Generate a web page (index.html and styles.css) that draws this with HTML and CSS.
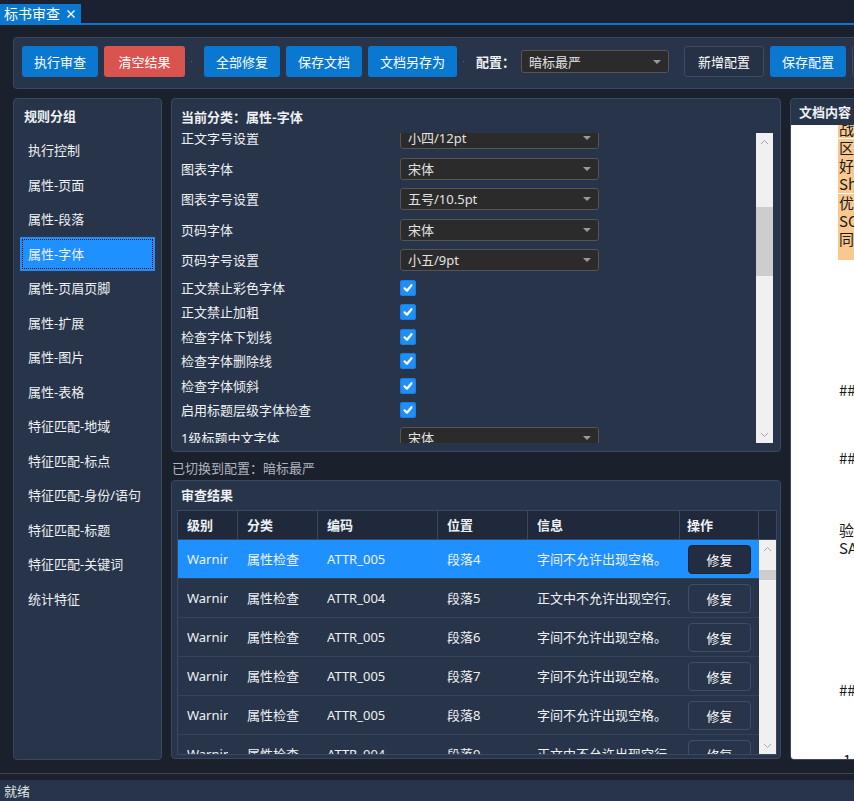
FILE: index.html
```html
<!DOCTYPE html>
<html lang="zh-CN">
<head>
  <meta charset="UTF-8">
  <title>标书审查</title>
  <link rel="stylesheet" href="styles.css">
</head>
<body>
<!-- 顶部标签页 -->
<div class="tabbar">
  <div class="tab">标书审查<svg class="tab-close" width="10" height="10" viewBox="0 0 10 10"><path d="M1.5 1.5L8.5 8.5M8.5 1.5L1.5 8.5" stroke="#fff" stroke-width="1.4"/></svg></div>
</div>

<div class="workspace">
  <!-- 工具栏 -->
  <div class="toolbar">
    <button class="btn">执行审查</button>
    <button class="btn btn-danger">清空结果</button>
    <span class="sep"></span>
    <button class="btn">全部修复</button>
    <button class="btn">保存文档</button>
    <button class="btn">文档另存为</button>
    <span class="sep"></span>
    <span class="config-label">配置：</span>
    <div class="combo combo-config"><span>暗标最严</span><i class="caret"></i></div>
    <button class="btn btn-outline">新增配置</button>
    <button class="btn">保存配置</button>
    <button class="btn btn-outline">删除配置</button>
  </div>

  <div class="main">
    <!-- 规则分组 -->
    <aside class="panel groups">
      <div class="panel-title groups-title">规则分组</div>
      <ul class="group-list">
        <li class="group-item">执行控制</li>
        <li class="group-item">属性-页面</li>
        <li class="group-item">属性-段落</li>
        <li class="group-item active">属性-字体</li>
        <li class="group-item">属性-页眉页脚</li>
        <li class="group-item">属性-扩展</li>
        <li class="group-item">属性-图片</li>
        <li class="group-item">属性-表格</li>
        <li class="group-item">特征匹配-地域</li>
        <li class="group-item">特征匹配-标点</li>
        <li class="group-item">特征匹配-身份/语句</li>
        <li class="group-item">特征匹配-标题</li>
        <li class="group-item">特征匹配-关键词</li>
        <li class="group-item">统计特征</li>
      </ul>
    </aside>

    <section class="center">
      <!-- 当前分类设置 -->
      <div class="panel settings">
        <div class="panel-title">当前分类：属性-字体</div>
        <div class="settings-scroll">
          <div class="settings-rows">
            <div class="setting-row"><span class="setting-label">正文字号设置</span><div class="combo"><span>小四/12pt</span><i class="caret"></i></div></div>
            <div class="setting-row"><span class="setting-label">图表字体</span><div class="combo"><span>宋体</span><i class="caret"></i></div></div>
            <div class="setting-row"><span class="setting-label">图表字号设置</span><div class="combo"><span>五号/10.5pt</span><i class="caret"></i></div></div>
            <div class="setting-row"><span class="setting-label">页码字体</span><div class="combo"><span>宋体</span><i class="caret"></i></div></div>
            <div class="setting-row"><span class="setting-label">页码字号设置</span><div class="combo"><span>小五/9pt</span><i class="caret"></i></div></div>
            <div class="setting-row check"><span class="setting-label">正文禁止彩色字体</span><span class="checkbox"><svg width="16" height="16" viewBox="0 0 16 16"><path d="M4.5 8.3L7 10.8L11.5 5.2" fill="none" stroke="#fff" stroke-width="2.2" stroke-linecap="round" stroke-linejoin="round"/></svg></span></div>
            <div class="setting-row check"><span class="setting-label">正文禁止加粗</span><span class="checkbox"><svg width="16" height="16" viewBox="0 0 16 16"><path d="M4.5 8.3L7 10.8L11.5 5.2" fill="none" stroke="#fff" stroke-width="2.2" stroke-linecap="round" stroke-linejoin="round"/></svg></span></div>
            <div class="setting-row check"><span class="setting-label">检查字体下划线</span><span class="checkbox"><svg width="16" height="16" viewBox="0 0 16 16"><path d="M4.5 8.3L7 10.8L11.5 5.2" fill="none" stroke="#fff" stroke-width="2.2" stroke-linecap="round" stroke-linejoin="round"/></svg></span></div>
            <div class="setting-row check"><span class="setting-label">检查字体删除线</span><span class="checkbox"><svg width="16" height="16" viewBox="0 0 16 16"><path d="M4.5 8.3L7 10.8L11.5 5.2" fill="none" stroke="#fff" stroke-width="2.2" stroke-linecap="round" stroke-linejoin="round"/></svg></span></div>
            <div class="setting-row check"><span class="setting-label">检查字体倾斜</span><span class="checkbox"><svg width="16" height="16" viewBox="0 0 16 16"><path d="M4.5 8.3L7 10.8L11.5 5.2" fill="none" stroke="#fff" stroke-width="2.2" stroke-linecap="round" stroke-linejoin="round"/></svg></span></div>
            <div class="setting-row check"><span class="setting-label">启用标题层级字体检查</span><span class="checkbox"><svg width="16" height="16" viewBox="0 0 16 16"><path d="M4.5 8.3L7 10.8L11.5 5.2" fill="none" stroke="#fff" stroke-width="2.2" stroke-linecap="round" stroke-linejoin="round"/></svg></span></div>
            <div class="setting-row"><span class="setting-label">1级标题中文字体</span><div class="combo"><span>宋体</span><i class="caret"></i></div></div>
          </div>
          <div class="vscroll">
            <div class="vscroll-arrow"><svg width="9" height="6" viewBox="0 0 9 6"><path d="M1 5L4.5 1.5L8 5" fill="none" stroke="#a6a6a6"/></svg></div>
            <div class="vscroll-track"><div class="vscroll-thumb settings-thumb"></div></div>
            <div class="vscroll-arrow"><svg width="9" height="6" viewBox="0 0 9 6"><path d="M1 1L4.5 4.5L8 1" fill="none" stroke="#a6a6a6"/></svg></div>
          </div>
        </div>
      </div>

      <div class="hint">已切换到配置：暗标最严</div>

      <!-- 审查结果 -->
      <div class="panel results">
        <div class="panel-title results-title">审查结果</div>
        <div class="table">
          <div class="table-head">
            <div class="th">级别</div>
            <div class="th">分类</div>
            <div class="th">编码</div>
            <div class="th">位置</div>
            <div class="th">信息</div>
            <div class="th">操作</div>
            <div class="th"></div>
          </div>
          <div class="table-body">
            <div class="rows">
              <div class="tr selected">
                <div class="td"><span>Warning</span></div><div class="td"><span>属性检查</span></div><div class="td"><span>ATTR_005</span></div><div class="td"><span>段落4</span></div><div class="td"><span>字间不允许出现空格。</span></div><div class="td td-action"><button class="fix-btn">修复</button></div>
              </div>
              <div class="tr">
                <div class="td"><span>Warning</span></div><div class="td"><span>属性检查</span></div><div class="td"><span>ATTR_004</span></div><div class="td"><span>段落5</span></div><div class="td"><span>正文中不允许出现空行。</span></div><div class="td td-action"><button class="fix-btn">修复</button></div>
              </div>
              <div class="tr">
                <div class="td"><span>Warning</span></div><div class="td"><span>属性检查</span></div><div class="td"><span>ATTR_005</span></div><div class="td"><span>段落6</span></div><div class="td"><span>字间不允许出现空格。</span></div><div class="td td-action"><button class="fix-btn">修复</button></div>
              </div>
              <div class="tr">
                <div class="td"><span>Warning</span></div><div class="td"><span>属性检查</span></div><div class="td"><span>ATTR_005</span></div><div class="td"><span>段落7</span></div><div class="td"><span>字间不允许出现空格。</span></div><div class="td td-action"><button class="fix-btn">修复</button></div>
              </div>
              <div class="tr">
                <div class="td"><span>Warning</span></div><div class="td"><span>属性检查</span></div><div class="td"><span>ATTR_005</span></div><div class="td"><span>段落8</span></div><div class="td"><span>字间不允许出现空格。</span></div><div class="td td-action"><button class="fix-btn">修复</button></div>
              </div>
              <div class="tr">
                <div class="td"><span>Warning</span></div><div class="td"><span>属性检查</span></div><div class="td"><span>ATTR_004</span></div><div class="td"><span>段落9</span></div><div class="td"><span>正文中不允许出现空行。</span></div><div class="td td-action"><button class="fix-btn">修复</button></div>
              </div>
            </div>
            <div class="vscroll">
              <div class="vscroll-arrow"><svg width="9" height="6" viewBox="0 0 9 6"><path d="M1 5L4.5 1.5L8 5" fill="none" stroke="#a6a6a6"/></svg></div>
              <div class="vscroll-track"><div class="vscroll-thumb table-thumb"></div></div>
              <div class="vscroll-arrow"><svg width="9" height="6" viewBox="0 0 9 6"><path d="M1 1L4.5 4.5L8 1" fill="none" stroke="#a6a6a6"/></svg></div>
            </div>
          </div>
        </div>
      </div>
    </section>

    <!-- 文档内容 -->
    <section class="panel doc">
      <div class="doc-title">文档内容</div>
      <div class="doc-body">
        <p class="mark first">战略合作与服务保障</p>
        <p class="mark">区域化运维服务体系<br>好评率持续保持领先<br>Sherlock 平台部署</p>
        <p class="mark last">优化资源调度方案<br>SCADA 系统接入<br>同步完成数据迁移</p>
        <p class="doc-line gap-a">## 二、技术方案</p>
        <p class="doc-line gap-b">## 三、实施计划</p>
        <p class="doc-line gap-c">验收标准与流程</p>
        <p class="doc-line">SAP 接口对接说明</p>
        <p class="doc-line gap-d">## 四、售后服务</p>
        <p class="doc-line gap-e num">1. 服务响应时间</p>
      </div>
    </section>
  </div>
</div>

<div class="statusbar">就绪</div>
</body>
</html>
```

FILE: styles.css
```css
* {
  box-sizing: border-box;
}

body {
  margin: 0;
  height: 801px;
  overflow: hidden;
  display: flex;
  flex-direction: column;
  background-color: #1a202c;
  color: #eef1f5;
  font-family: "Noto Sans", "Noto Sans CJK SC", sans-serif;
  font-size: 13px;
  line-height: 20px;
}

/* 标签页 */
.tabbar {
  height: 25px;
  flex-shrink: 0;
  display: flex;
  align-items: flex-end;
  border-bottom: 2px solid #0a78d0;
  background-color: #1b2130;
}

.tab {
  height: 19px;
  display: flex;
  align-items: center;
  gap: 6px;
  padding: 0 5px 0 4px;
  background-color: #0a78d0;
  color: #fff;
  font-family: "Noto Sans CJK SC", sans-serif;
  font-size: 14px;
  line-height: 19px;
}

.workspace {
  height: 749px;
  flex-shrink: 0;
  padding: 12px 0 0 13px;
  overflow: hidden;
  border-bottom: 1px solid #3b4454;
}

/* 工具栏 */
.toolbar {
  width: 900px;
  height: 52px;
  display: flex;
  align-items: center;
  gap: 6px;
  padding: 0 0 3px 8px;
  border: 1px solid #394860;
  border-radius: 4px;
  background-color: #283449;
}

.toolbar > * {
  flex-shrink: 0;
}

.btn {
  height: 31px;
  min-width: 76px;
  padding: 0 12px;
  border: none;
  border-radius: 3px;
  background-color: #0a78d0;
  color: #fff;
  font-family: "Noto Sans CJK SC", sans-serif;
  font-size: 13px;
  white-space: nowrap;
}

.btn-danger {
  min-width: 81px;
  background-color: #d9534f;
}

.btn-outline {
  min-width: 80px;
  border: 1px solid #3d4c66;
  background-color: #263146;
}

.sep {
  width: 1px;
  height: 1px;
  margin-right: 6px;
  background-color: #5d6a80;
}

.config-label {
  font-family: "Noto Sans CJK SC", sans-serif;
  font-weight: bold;
  white-space: nowrap;
}

.combo {
  width: 199px;
  height: 22px;
  display: flex;
  align-items: center;
  justify-content: space-between;
  padding: 0 7px;
  border: 1px solid #555;
  border-radius: 3px;
  background-color: #2b2b2b;
  color: #e2e2e2;
  flex-shrink: 0;
}

.combo-config {
  width: 148px;
  height: 23px;
  margin-right: 9px;
}

.caret {
  width: 0;
  height: 0;
  border-left: 4px solid transparent;
  border-right: 4px solid transparent;
  border-top: 4px solid #9a9a9a;
}

/* 主区域 */
.main {
  height: 662px;
  margin-top: 9px;
  display: flex;
  gap: 9px;
}

.main > * {
  flex-shrink: 0;
}

.panel {
  border: 1px solid #394860;
  border-radius: 4px;
  background-color: #283449;
}

.panel-title {
  font-family: "Noto Sans CJK SC", sans-serif;
  font-weight: bold;
  line-height: 20px;
}

/* 规则分组 */
.groups {
  width: 149px;
}

.groups-title {
  padding: 7px 0 0 10px;
  margin-bottom: 7px;
}

.group-list {
  list-style: none;
  margin: 0;
  padding: 0 6px;
}

.group-item {
  height: 34.5px;
  line-height: 34.5px;
  padding-left: 8px;
  white-space: nowrap;
}

.group-item.active {
  background-color: #1e90ff;
  outline: 1px dotted #111;
  outline-offset: -3px;
}

/* 中间列 */
.center {
  width: 610px;
  display: flex;
  flex-direction: column;
}

.settings {
  height: 354px;
  padding: 8px 7px 8px 9px;
}

.settings-scroll {
  height: 310px;
  margin-top: 6px;
  display: flex;
  overflow: hidden;
}

.settings-rows {
  flex: 1;
  margin-top: -10.25px;
}

.setting-row {
  height: 30.5px;
  display: flex;
  align-items: center;
}

.setting-row.check {
  height: 24.5px;
}

.setting-label {
  width: 219px;
  flex-shrink: 0;
}

.checkbox {
  width: 16px;
  height: 16px;
  border-radius: 3px;
  background-color: #1e8ef8;
  box-shadow: inset 0 0 0 1px #1a7fe0;
  display: flex;
}

.vscroll {
  width: 17px;
  flex-shrink: 0;
  display: flex;
  flex-direction: column;
  background-color: #f0f0f0;
}

.vscroll-arrow {
  height: 17px;
  display: flex;
  align-items: center;
  justify-content: center;
  flex-shrink: 0;
}

.vscroll-track {
  flex: 1;
}

.vscroll-thumb {
  background-color: #cdcdcd;
}

.settings-thumb {
  margin-top: 57px;
  height: 69px;
}

.table-thumb {
  margin-top: 13px;
  height: 10px;
}

.hint {
  height: 28px;
  padding: 4px 0 0 1px;
  line-height: 24px;
  color: #aeb4be;
  font-family: "Noto Sans CJK SC", sans-serif;
}

/* 审查结果 */
.results {
  height: 279px;
  padding: 4px 3px 3px 5px;
}

.results-title {
  padding-left: 4px;
  margin-bottom: 5px;
}

.table {
  width: 600px;
  border: 1px solid #394860;
}

.table-head {
  display: grid;
  grid-template-columns: 60px 80px 120px 90px 152px 79px 17px;
  height: 29px;
  background-color: #1f293b;
  border-bottom: 1px solid #394860;
}

.th {
  padding-left: 9px;
  line-height: 28px;
  font-family: "Noto Sans CJK SC", sans-serif;
  font-weight: bold;
  border-right: 1px solid #394860;
}

.th:nth-child(6) {
  padding-left: 7px;
}

.th:last-child {
  border-right: none;
}

.table-body {
  height: 214px;
  display: flex;
  overflow: hidden;
}

.rows {
  width: 581px;
}

.tr {
  height: 39px;
  display: grid;
  grid-template-columns: 60px 80px 120px 90px 152px 79px;
  align-items: center;
  border-bottom: 1px solid #35435a;
}

.tr.selected {
  background-color: #1e90ff;
}

.td {
  padding: 0 10px 0 9px;
}

.td span {
  display: block;
  overflow: hidden;
  white-space: nowrap;
}

.td-action {
  padding: 0 0 0 8px;
}

.fix-btn {
  width: 63px;
  height: 29px;
  border: 1px solid #3e4e68;
  border-radius: 4px;
  background-color: #283449;
  color: #fff;
  font-family: "Noto Sans CJK SC", sans-serif;
  font-size: 13px;
}

.tr.selected .fix-btn {
  background-color: #232d42;
  border-color: #1c2436;
}

/* 文档内容 */
.doc {
  width: 300px;
  display: flex;
  flex-direction: column;
  overflow: hidden;
}

.doc-title {
  height: 26px;
  padding-left: 8px;
  line-height: 26px;
  font-family: "Noto Sans CJK SC", sans-serif;
  font-weight: bold;
}

.doc-body {
  flex: 1;
  overflow: hidden;
  padding-left: 47px;
  background-color: #fff;
  color: #1a1a1a;
  font-family: "Noto Sans CJK SC", sans-serif;
  font-size: 15px;
  line-height: 18px;
}

.doc-body p {
  margin: 0;
  white-space: nowrap;
}

.mark {
  padding-left: 1px;
  margin-bottom: 1px !important;
  background-color: #f8c88f;
}

.mark.first {
  margin-top: -5px !important;
}

.mark.last {
  padding-bottom: 12px;
}

.doc-line {
  padding-left: 1px;
}

.gap-a { margin-top: 121px !important; }
.gap-b { margin-top: 50px !important; }
.gap-c { margin-top: 54px !important; }
.gap-d { margin-top: 124px !important; }
.gap-e { margin-top: 52px !important; }

.doc-line.num {
  padding-left: 5px;
}

/* 状态栏 */
.statusbar {
  height: 21px;
  margin-top: 6px;
  flex-shrink: 0;
  padding-left: 4px;
  line-height: 21px;
  background-color: #283449;
  color: #dfe3ea;
  font-family: "Noto Sans CJK SC", sans-serif;
}
```
